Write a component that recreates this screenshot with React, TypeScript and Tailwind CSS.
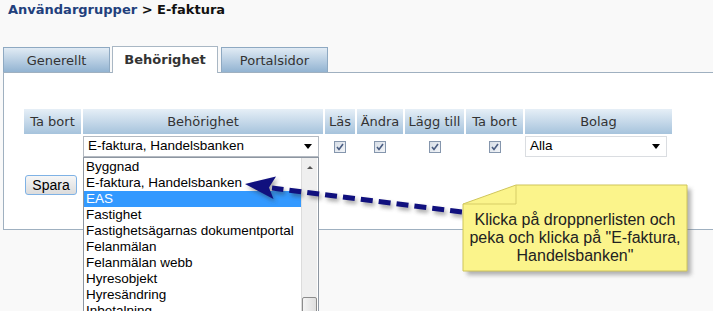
const items = [
  "Byggnad",
  "E-faktura, Handelsbanken",
  "EAS",
  "Fastighet",
  "Fastighetsägarnas dokumentportal",
  "Felanmälan",
  "Felanmälan webb",
  "Hyresobjekt",
  "Hyresändring",
  "Inbetalning",
];

const headers = ["Ta bort", "Behörighet", "Läs", "Ändra", "Lägg till", "Ta bort", "Bolag"];

function Check() {
  return (
    <svg width="12" height="12" viewBox="0 0 12 12">
      <defs>
        <linearGradient id="cb" x1="0" y1="0" x2="1" y2="1">
          <stop offset="0" stopColor="#d6dde6" />
          <stop offset="1" stopColor="#f4f6f9" />
        </linearGradient>
      </defs>
      <rect x="0.5" y="0.5" width="11" height="11" fill="url(#cb)" stroke="#8596ad" />
      <path d="M3 6 L5 8.5 L9 3" fill="none" stroke="#4a5d82" strokeWidth="1.6" />
    </svg>
  );
}

function Caret() {
  return <div className="h-0 w-0 border-x-[4px] border-t-[5px] border-x-transparent border-t-black" />;
}

function Tab({ label, active }: { label: string; active?: boolean }) {
  if (active) {
    return (
      <div className="relative z-10 -mt-px flex h-[27px] w-[106px] items-center justify-center border border-b-0 border-[#a9b7c4] bg-white font-bold text-[#333]">
        {label}
      </div>
    );
  }
  return (
    <div className="flex h-[26px] w-[107px] items-center justify-center border border-b-0 border-[#8ea9c2] bg-gradient-to-b from-[#e1ebf4] to-[#8fb1d0] text-[#333]">
      {label}
    </div>
  );
}

export default function App() {
  return (
    <div className="relative h-[311px] w-[713px] overflow-hidden bg-[#f9f9f9] font-['DejaVu_Sans',Verdana,sans-serif] text-[13px]">
      <div className="pl-[8px] pt-[2px] text-[13px] font-bold leading-[16px]">
        <span className="text-[#223f7c]">Användargrupper</span>
        <span className="text-[#111]"> &gt; E-faktura</span>
      </div>

      <div className="ml-[3px] mt-[29px] flex items-end gap-[2px]">
        <Tab label="Generellt" />
        <Tab label="Behörighet" active />
        <div className="ml-px">
          <Tab label="Portalsidor" />
        </div>
      </div>

      <div className="relative -mt-px ml-[3px] h-[158px] border-b border-l border-t border-[#9fb0c0] bg-white pl-[20px] pt-[36px]">
        <div className="grid grid-cols-[57px_240px_30px_46px_59px_57px_147px] gap-x-[2px] gap-y-[2px]">
          {headers.map((h, i) => (
            <div
              key={i}
              className="flex h-[25px] items-center justify-center bg-gradient-to-b from-[#e6eff7] to-[#a6c3dc] text-[#333]"
            >
              {h}
            </div>
          ))}

          <div />
          <div className="relative">
            <div className="flex h-[21px] w-[236px] items-center justify-between border border-[#b4bac2] bg-white pl-[4px] pr-[6px] font-['Liberation_Sans',Arial,sans-serif] text-[13.5px] text-black">
              <span>E-faktura, Handelsbanken</span>
              <Caret />
            </div>
            <div className="absolute left-0 top-[21px] z-20 h-[200px] w-[236px] border border-[#8d96a1] bg-white font-['Liberation_Sans',Arial,sans-serif] text-[13.5px] leading-[16px] text-black">
              <div className="flex">
                <div className="w-[217px] pt-px">
                  {items.map((it) => (
                    <div
                      key={it}
                      className={
                        it === "EAS"
                          ? "h-[16px] bg-[#3399ff] pl-[2px] text-white"
                          : "h-[16px] whitespace-nowrap pl-[2px]"
                      }
                    >
                      {it}
                    </div>
                  ))}
                </div>
                <div className="flex h-[200px] w-[16px] flex-col border-l border-[#dcdcdc] bg-[#efefef]">
                  <div className="flex h-[18px] items-center justify-center">
                    <div className="h-0 w-0 border-x-[3px] border-b-[3px] border-x-transparent border-b-[#555]" />
                  </div>
                  <div className="mt-[121px] h-[40px] rounded-[2px] border border-[#8c8c8c] bg-gradient-to-r from-[#f4f4f4] to-[#dedede]" />
                </div>
              </div>
            </div>
          </div>
          {[0, 1, 2, 3].map((i) => (
            <div key={i} className="flex h-[21px] items-center justify-center">
              <Check />
            </div>
          ))}
          <div className="flex h-[21px] w-[142px] items-center justify-between border border-[#dadde1] bg-white pl-[4px] pr-[6px] font-['Liberation_Sans',Arial,sans-serif] text-[13.5px] text-black">
            <span>Alla</span>
            <Caret />
          </div>
        </div>

        <button className="ml-[1px] mt-[18px] flex h-[20px] w-[52px] items-center justify-center rounded-[3px] border border-[#7fb2e5] bg-gradient-to-b from-[#f6f6f6] to-[#dcdcdc] font-['Liberation_Sans',Arial,sans-serif] text-[14px] text-black">
          Spara
        </button>
      </div>

      <svg className="pointer-events-none absolute left-0 top-0 z-30" width="713" height="311">
        <defs>
          <filter id="sh" x="-20%" y="-20%" width="140%" height="140%">
            <feGaussianBlur stdDeviation="2" />
          </filter>
        </defs>
        <g opacity="0.45" transform="translate(2 3)" filter="url(#sh)">
          <line x1="462" y1="212" x2="272" y2="188" stroke="#333" strokeWidth="5" strokeDasharray="12 6" />
          <polygon points="245,184 276,176.5 269,187.5 273.5,199" fill="#333" />
        </g>
        <line x1="462" y1="212" x2="272" y2="188" stroke="#10107e" strokeWidth="5" strokeDasharray="12 6" />
        <polygon points="245,184 276,176.5 269,187.5 273.5,199" fill="#10107e" />

        <polygon points="467,208 520,189 691,189 691,275 467,275" fill="#666" opacity="0.5" filter="url(#sh)" />
        <polygon points="463,204 516,185 687,185 687,271 463,271" fill="#fbf48b" stroke="#cfc55a" />
        <polyline points="516,185 516,204 463,204" fill="none" stroke="#d7cd66" />
      </svg>

      <div className="absolute left-[463px] top-[211px] z-40 w-[224px] text-center font-['Liberation_Sans',Arial,sans-serif] text-[16px] leading-[18px] text-[#222]">
        Klicka på droppnerlisten och
        <br />
        peka och klicka på "E-faktura,
        <br />
        Handelsbanken"
      </div>
    </div>
  );
}
